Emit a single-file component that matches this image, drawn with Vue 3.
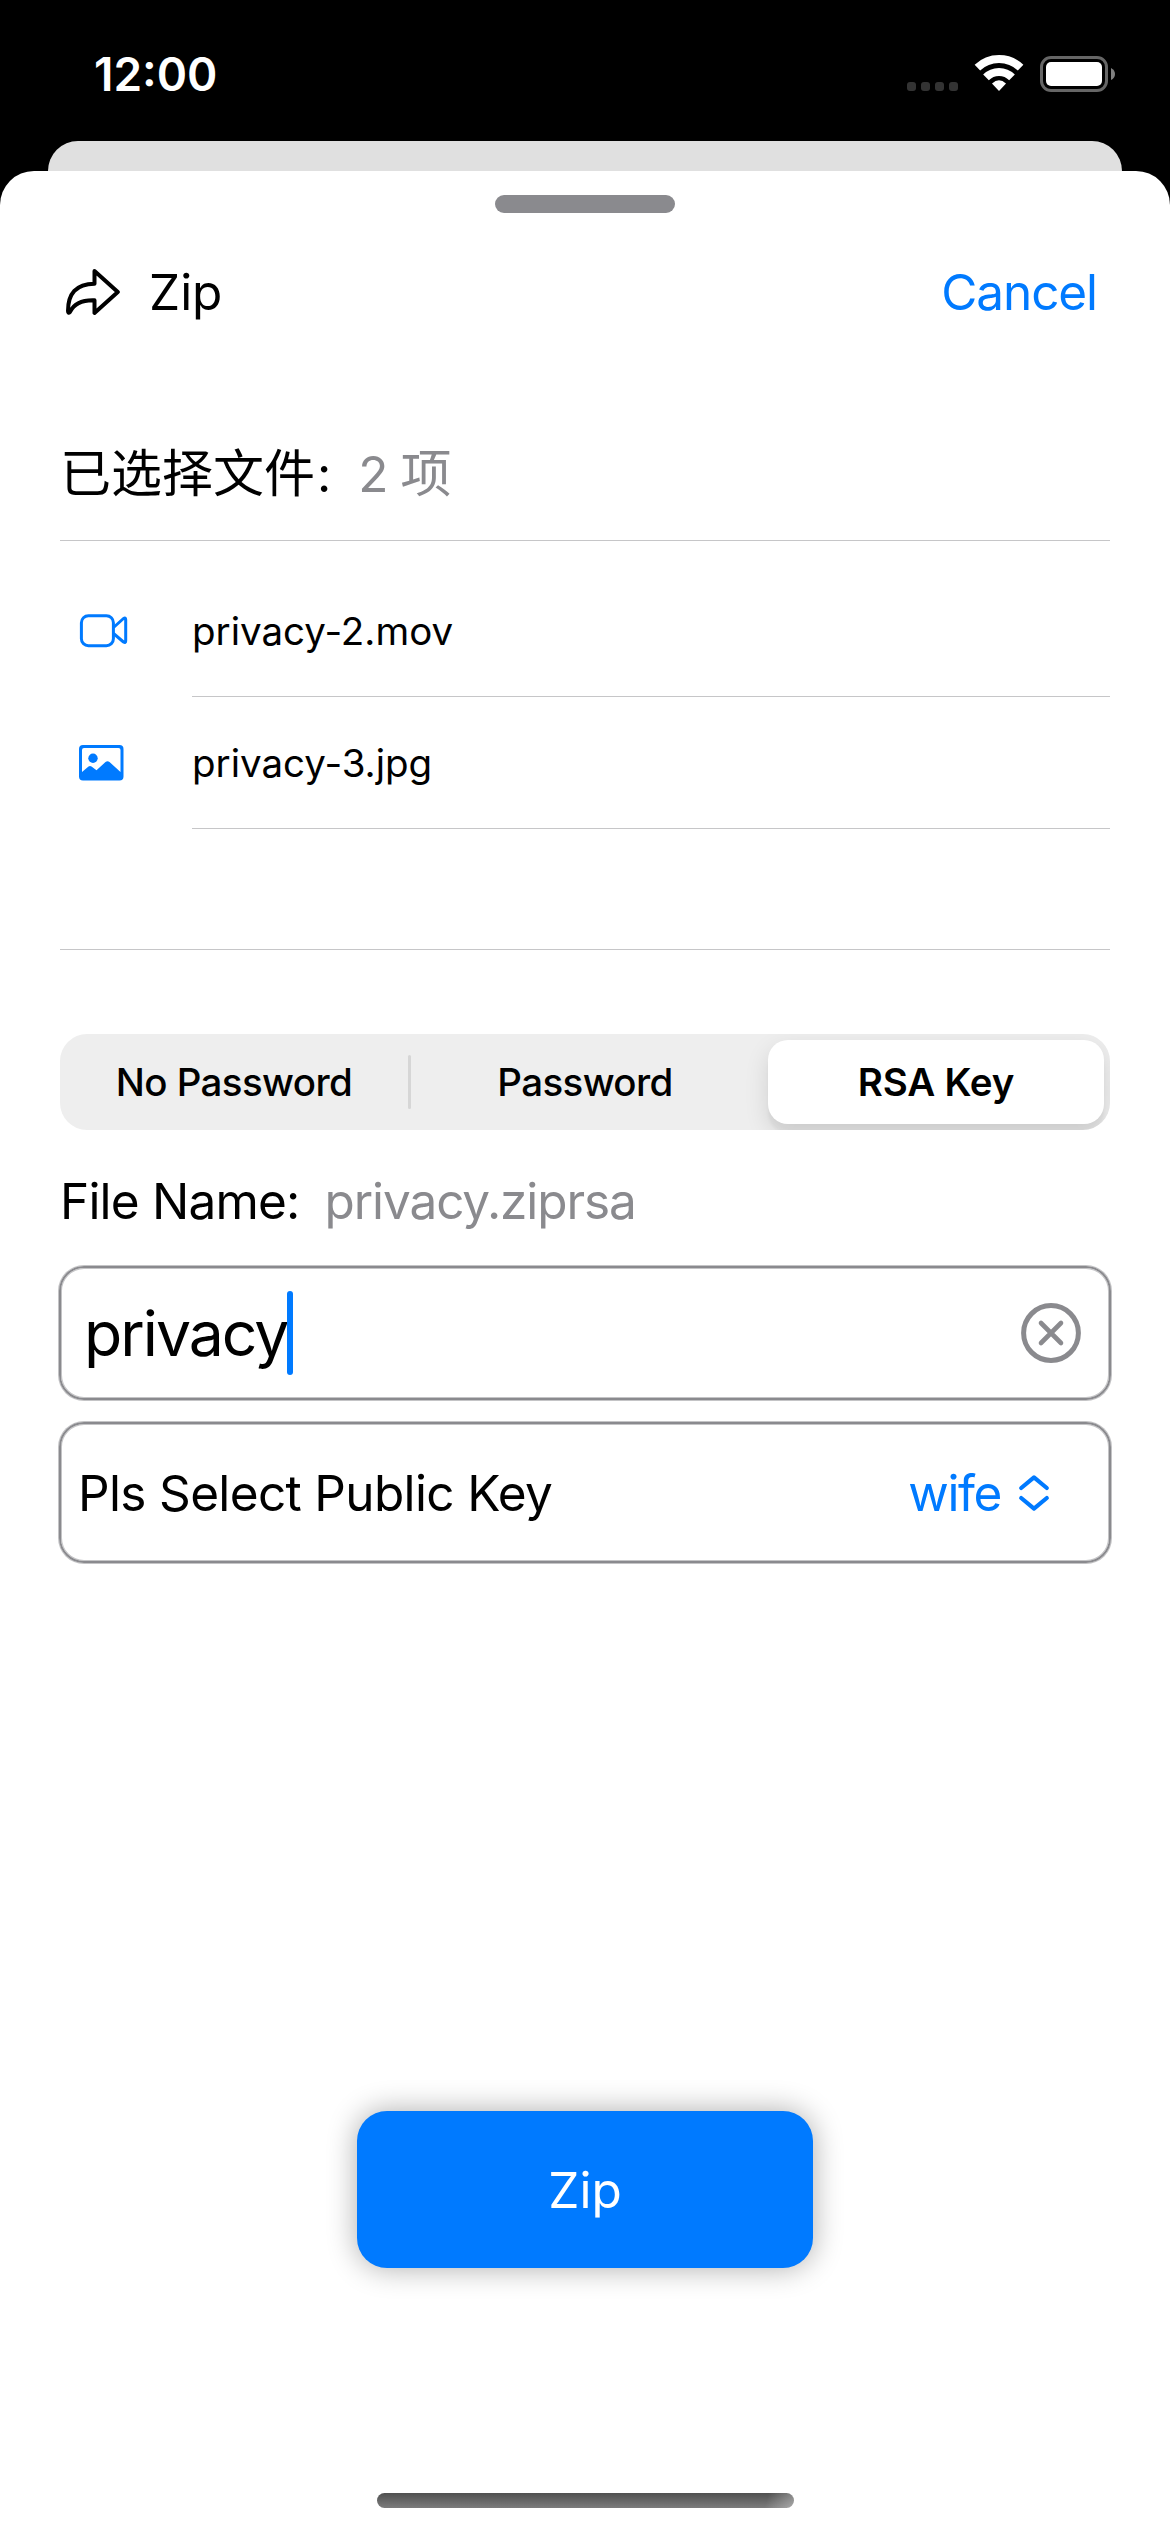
<script setup>
import { ref } from 'vue'

const files = [
  { name: 'privacy-2.mov', kind: 'video' },
  { name: 'privacy-3.jpg', kind: 'image' },
]
const modes = ['No Password', 'Password', 'RSA Key']
const active = ref(2)
</script>

<template>
  <div class="screen">
    <header class="status">
      <span class="time">12:00</span>
      <div class="indicators">
        <div class="dots"><i v-for="n in 4" :key="n"></i></div>
        <svg class="wifi" width="50" height="42" viewBox="0 0 50 42">
          <g fill="none" stroke="#fff" stroke-width="8">
            <path d="M3.400 14.600A31.300 31.300 0 0 1 46.600 14.600" />
            <path d="M12 24.400A18.300 18.300 0 0 1 38 24.400" />
          </g>
          <path d="M25 38L18 30.500Q25 24 32 30.500Z" fill="#fff" />
        </svg>
        <svg class="battery" width="76" height="42" viewBox="0 0 76 42">
          <rect x="1.5" y="1.5" width="65" height="33" rx="9.5" fill="none" stroke="#666" stroke-width="3" />
          <rect x="6" y="6" width="56" height="24" rx="5" fill="#fff" />
          <path d="M71 12Q75 14 75 18T71 24Z" fill="#808080" />
        </svg>
      </div>
    </header>

    <div class="backcard"></div>

    <main class="sheet">
      <div class="handle"></div>

      <div class="header">
        <svg width="56" height="48" viewBox="0 0 56 48" fill="none" stroke="#000" stroke-width="4" stroke-linejoin="round">
          <path d="M30.500 3L53.800 24L30.500 45V32.300C16 31.800 9.500 36.500 6 44Q4 45.800 4 43C4 26 12 15.700 30.500 15.700Z" />
        </svg>
        <span class="title">Zip</span>
        <span class="cancel">Cancel</span>
      </div>

      <div class="selected">
        <span class="cjk">已选择文件</span><span class="colon">:</span>
        <span class="count">2 <span class="cjk">项</span></span>
      </div>

      <div class="line"></div>
      <ul class="files">
        <li v-for="f in files" :key="f.name">
          <div class="icon">
            <svg v-if="f.kind === 'video'" width="50" height="34" viewBox="0 0 50 34" fill="none" stroke="#007aff" stroke-width="3" stroke-linejoin="round">
              <rect x="3.400" y="1.700" width="32" height="30" rx="7" />
              <path d="M35.500 13.500L45.500 4.500Q47.700 3.300 47.700 5.500V27Q47.700 29.200 45.500 28L35.500 19.500" />
            </svg>
            <svg v-else width="50" height="36" viewBox="-0.500 0 50 36">
              <path fill="#007aff" fill-rule="evenodd" d="M4.500 0H41Q45 0 45 4V31.500Q45 35.500 41 35.500H4.500Q.5 35.500 .5 31.500V4Q.5 0 4.500 0ZM5.500 3Q3.500 3 3.500 5V27L10 21.500Q11.500 20.500 13 21.500L18 25.200L27 17Q29 15.600 31 17L42 27V5Q42 3 40 3Z" />
              <circle cx="14.500" cy="13.200" r="4.700" fill="#007aff" />
            </svg>
          </div>
          <div class="name"><span>{{ f.name }}</span></div>
        </li>
      </ul>
      <div class="line last"></div>

      <div class="segments">
        <button
          v-for="(m, i) in modes"
          :key="m"
          :class="{ on: i === active, divided: i === 0 }"
          @click="active = i"
        ><span>{{ m }}</span></button>
      </div>

      <div class="filename">
        <span class="label">File Name:</span>
        <span class="value">privacy.ziprsa</span>
      </div>

      <div class="box field">
        <span class="typed">privacy</span>
        <i class="caret"></i>
        <svg class="clear" width="60" height="60" viewBox="0 0 60 60" fill="none" stroke="#8a8a8e" stroke-width="5" stroke-linecap="round">
          <circle cx="30" cy="30" r="27.400" />
          <path d="M20 20L40 40M40 20L20 40" stroke-width="4.600" />
        </svg>
      </div>

      <div class="box picker">
        <span class="prompt">Pls Select Public Key</span>
        <span class="choice">wife</span>
        <svg width="32" height="38" viewBox="0 0 32 38" fill="none" stroke="#007aff" stroke-width="4.200" stroke-linecap="round" stroke-linejoin="round">
          <path d="M3.200 14L16 3.400L28.800 14M3.200 24L16 34.600L28.800 24" />
        </svg>
      </div>

      <button class="zip"><span>Zip</span></button>
      <div class="home"></div>
    </main>
  </div>
</template>

<style>
body {
  margin: 0;
  background: #000;
}
</style>

<style scoped>
.screen {
  width: 1170px;
  height: 2532px;
  overflow: hidden;
  background: #000;
  color: #000;
  font-family: Inter, "Noto Sans CJK SC", sans-serif;
  font-size: 49.5px;
  display: flex;
  flex-direction: column;
}
.screen span {
  white-space: nowrap;
}
.status {
  height: 141px;
  display: flex;
  justify-content: space-between;
  box-sizing: border-box;
  padding: 0 54px 0 94px;
  color: #fff;
}
.time {
  font-size: 46px;
  font-weight: 600;
  line-height: 60px;
  margin-top: 44px;
}
.indicators {
  display: flex;
  margin-top: 53px;
}
.dots {
  display: flex;
  gap: 5px;
  margin: 29px 16px 0 0;
}
.dots i {
  width: 9px;
  height: 9px;
  border-radius: 3px;
  background: #333;
}
.battery {
  margin: 3px 0 0 16px;
}
.backcard {
  height: 30px;
  margin: 0 48px;
  border-radius: 30px 30px 0 0;
  background: #e0e0e0;
}
.sheet {
  flex: 1;
  display: flex;
  flex-direction: column;
  background: #fff;
  border-radius: 34px 34px 0 0;
  padding: 0 60px;
}
.handle {
  width: 180px;
  height: 18px;
  border-radius: 9px;
  background: #8a8a8e;
  margin: 24px auto 0;
}
.header {
  display: flex;
  align-items: center;
  height: 100px;
  margin: 29px 13px 0 4px;
}
.title {
  margin-left: 29px;
}
.cancel {
  margin-left: auto;
  letter-spacing: -1.1px;
  color: #007aff;
}
.selected {
  height: 80px;
  line-height: 80px;
  margin-top: 92px;
  display: flex;
}
.cjk {
  font-size: 51px;
}
.colon {
  margin-left: 2px;
}
.count {
  margin-left: 27px;
  word-spacing: -2px;
  color: #8a8a8e;
}
.line {
  height: 1px;
  background: #c6c6c8;
  margin-top: 26px;
}
.files {
  list-style: none;
  margin: 24px 0 0;
  padding: 0;
}
.files li {
  height: 132px;
  display: flex;
  align-items: center;
}
.icon {
  width: 114px;
  padding-left: 18px;
  display: flex;
}
.name {
  flex: 1;
  height: 131px;
  line-height: 133px;
  border-bottom: 1px solid #c6c6c8;
  font-size: 38.5px;
}
.line.last {
  margin-top: 120px;
}
.segments {
  display: flex;
  height: 84px;
  padding: 6px;
  margin-top: 84px;
  border-radius: 27px;
  background: #eee;
  overflow: hidden;
}
.segments button {
  flex: 0 0 336px;
  margin-right: 15px;
  border: 0;
  padding: 0;
  background: none;
  border-radius: 20px;
  font: 500 38.5px/84px Inter, sans-serif;
  letter-spacing: -0.6px;
  color: #000;
  position: relative;
}
.segments .divided::after {
  content: "";
  position: absolute;
  right: -9px;
  top: 15px;
  width: 3px;
  height: 54px;
  border-radius: 2px;
  background: #d6d6d6;
}
.segments .on {
  background: #fff;
  font-weight: 600;
  letter-spacing: -0.2px;
  margin-right: 0;
  box-shadow: 0 9px 24px rgba(0, 0, 0, 0.12), 0 9px 3px rgba(0, 0, 0, 0.04);
}
.filename {
  height: 80px;
  line-height: 80px;
  margin-top: 31px;
  display: flex;
}
.label {
  letter-spacing: -0.8px;
}
.value {
  margin-left: 25px;
  letter-spacing: -1.1px;
  color: #8a8a8e;
}
.box {
  margin: 25px -1px 0;
  box-sizing: border-box;
  border: 2px solid #8a8a8e;
  border-radius: 25px;
  box-shadow: 0 0 0 1px rgba(138, 138, 142, 0.5), inset 0 0 0 1px rgba(138, 138, 142, 0.5);
  display: flex;
  align-items: center;
}
.field {
  height: 134px;
  padding: 0 28px 0 23px;
}
.typed {
  font-size: 62.5px;
  letter-spacing: -2px;
  line-height: 130px;
}
.caret {
  width: 6px;
  height: 84px;
  border-radius: 3px;
  background: #007aff;
}
.clear {
  margin-left: auto;
}
.picker {
  height: 141px;
  margin-top: 22px;
  padding: 0 59px 0 17px;
}
.prompt {
  letter-spacing: -0.65px;
}
.choice {
  margin: 0 17px 0 auto;
  letter-spacing: -1.4px;
  color: #007aff;
}
.zip {
  width: 456px;
  height: 157px;
  margin: 548px auto 0;
  border: 0;
  border-radius: 30px;
  background: #007aff;
  color: #fff;
  font: 400 49.5px Inter, sans-serif;
  box-shadow: 0 0 30px rgba(0, 0, 0, 0.33);
}
.home {
  width: 417px;
  height: 15px;
  margin: 225px auto 0;
  border-radius: 8px;
  background: linear-gradient(105deg, transparent 93%, rgba(255, 255, 255, 0.35)), linear-gradient(#505050, #7c7c7c);
}
</style>
